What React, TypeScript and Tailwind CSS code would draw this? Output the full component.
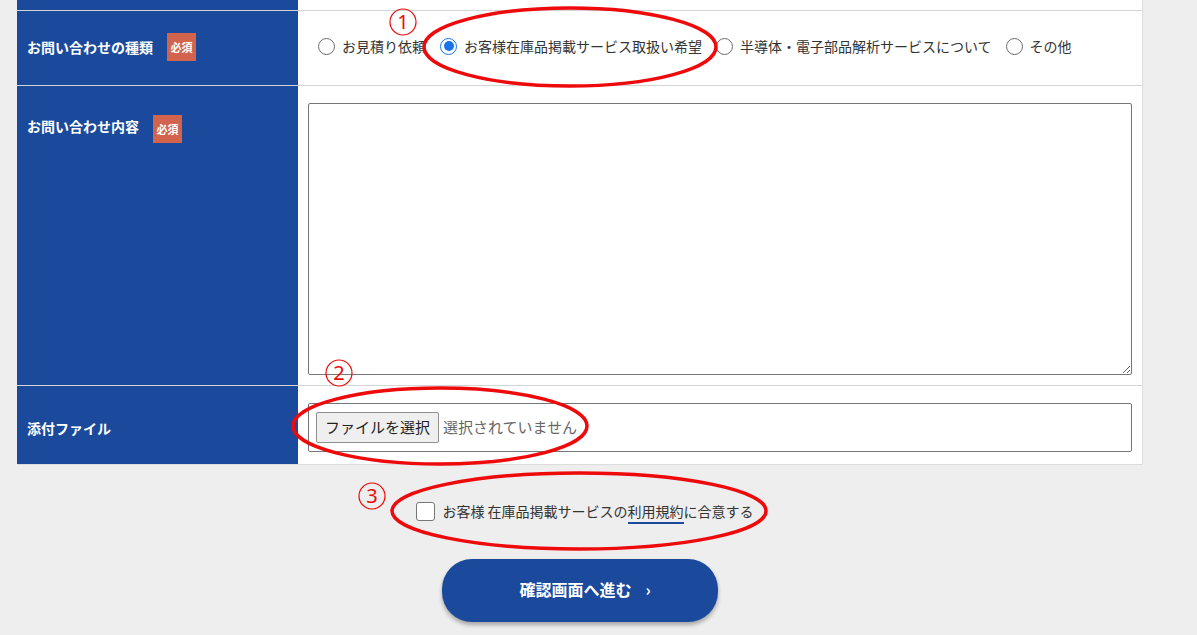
import React from "react";

const options = [
  { label: "お見積り依頼", checked: false },
  { label: "お客様在庫品掲載サービス取扱い希望", checked: true },
  { label: "半導体・電子部品解析サービスについて", checked: false },
  { label: "その他", checked: false },
];

function Badge() {
  return (
    <span className="ml-[14px] inline-flex h-[28px] w-[29px] items-center justify-center bg-[#d2634d] text-[11px] font-bold text-white">
      必須
    </span>
  );
}

function Radio({ checked }: { checked: boolean }) {
  return (
    <span
      className={
        "flex h-[17px] w-[17px] items-center justify-center rounded-full border-[1.5px] bg-white " +
        (checked ? "border-[#1a73e8]" : "border-[#6b6b6b]")
      }
    >
      {checked && <span className="h-[10px] w-[10px] rounded-full bg-[#1a73e8]" />}
    </span>
  );
}

export default function App() {
  return (
    <div
      className="relative min-h-screen h-[635px] overflow-hidden bg-[#eeeeee] text-[#333]"
      style={{ fontFamily: '"Noto Sans CJK JP", "Noto Sans", sans-serif' }}
    >
      <div className="ml-[17px] w-[1126px]">
        <div className="border-b border-r border-[#dcdcdc]">
          {/* top row, cut off */}
          <div className="grid h-[10px] grid-cols-[281px_1fr]">
            <div className="bg-[#1b4a9c]" />
            <div className="bg-white" />
          </div>

          {/* お問い合わせの種類 */}
          <div className="grid h-[75px] grid-cols-[281px_1fr] border-t border-[#d4d4d4]">
            <div className="flex items-center bg-[#1b4a9c] pb-[2px] pl-[10px] text-[14px] font-bold text-white">
              お問い合わせの種類
              <Badge />
            </div>
            <div className="flex items-center bg-white pb-[4px] pl-[20px] text-[14px]">
              {options.map((o) => (
                <label key={o.label} className="mr-[14px] flex items-center gap-[7px]">
                  <Radio checked={o.checked} />
                  <span>{o.label}</span>
                </label>
              ))}
            </div>
          </div>

          {/* お問い合わせ内容 */}
          <div className="grid h-[300px] grid-cols-[281px_1fr] border-t border-[#d4d4d4]">
            <div className="flex items-start bg-[#1b4a9c] pl-[10px] pt-[29px] text-[14px] font-bold text-white">
              <span className="mt-[1px]">お問い合わせ内容</span>
              <Badge />
            </div>
            <div className="bg-white px-[10px] pt-[17px] pb-[10px]">
              <textarea className="block h-[272px] w-full resize-y rounded-[2px] border border-[#767676] bg-white outline-none" />
            </div>
          </div>

          {/* 添付ファイル */}
          <div className="grid h-[79px] grid-cols-[281px_1fr] border-t border-[#d4d4d4]">
            <div className="flex items-center bg-[#1b4a9c] pl-[10px] pt-[6px] text-[14px] font-bold text-white">
              添付ファイル
            </div>
            <div className="bg-white px-[10px] pt-[17px]">
              <div className="flex h-[49px] items-center rounded-[2px] border border-[#767676] pl-[7px] text-[15px]">
                <span className="flex h-[31px] items-center rounded-[2px] border border-[#8f8f8f] bg-[#efefef] px-[8px] text-[#222]">
                  ファイルを選択
                </span>
                <span className="ml-[4px] text-[#666]">選択されていません</span>
              </div>
            </div>
          </div>
        </div>

        {/* agreement */}
        <div className="mt-[36px] flex items-center justify-center pl-[10px] text-[14px]">
          <span className="h-[19px] w-[19px] rounded-[3px] border-[1.5px] border-[#767676] bg-white" />
          <span className="ml-[7px]">
            お客様 在庫品掲載サービスの
            <span className="border-b-2 border-[#1b4a9c] pb-[1px]">利用規約</span>
            に合意する
          </span>
        </div>

        {/* submit */}
        <div className="mt-[37px] flex justify-center">
          <button className="flex h-[63px] w-[276px] items-center justify-center rounded-[30px] bg-[#1b4a9c] pb-[3px] pl-[10px] text-[16px] font-bold text-white shadow-[0_3px_4px_rgba(0,0,0,0.3)]">
            確認画面へ進む
            <span className="ml-[14px] text-[16px]">›</span>
          </button>
        </div>
      </div>

      {/* annotation overlay */}
      <svg className="pointer-events-none absolute left-0 top-0" width="1197" height="635">
        <g fill="none" stroke="#ee0a0a">
          <ellipse cx="570" cy="47" rx="146" ry="39" strokeWidth="3.5" />
          <ellipse cx="440" cy="426" rx="147" ry="38" strokeWidth="3.5" />
          <ellipse cx="579" cy="511" rx="187" ry="38" strokeWidth="3.5" />
          <circle cx="403" cy="22" r="13" strokeWidth="1.2" />
          <circle cx="339" cy="373" r="13" strokeWidth="1.2" />
          <circle cx="372" cy="496" r="13" strokeWidth="1.2" />
        </g>
        <g fill="#ee0a0a" fontSize="20" textAnchor="middle" fontFamily="'Noto Sans', sans-serif">
          <text x="403" y="29">1</text>
          <text x="339" y="380">2</text>
          <text x="372" y="503">3</text>
        </g>
      </svg>
    </div>
  );
}
